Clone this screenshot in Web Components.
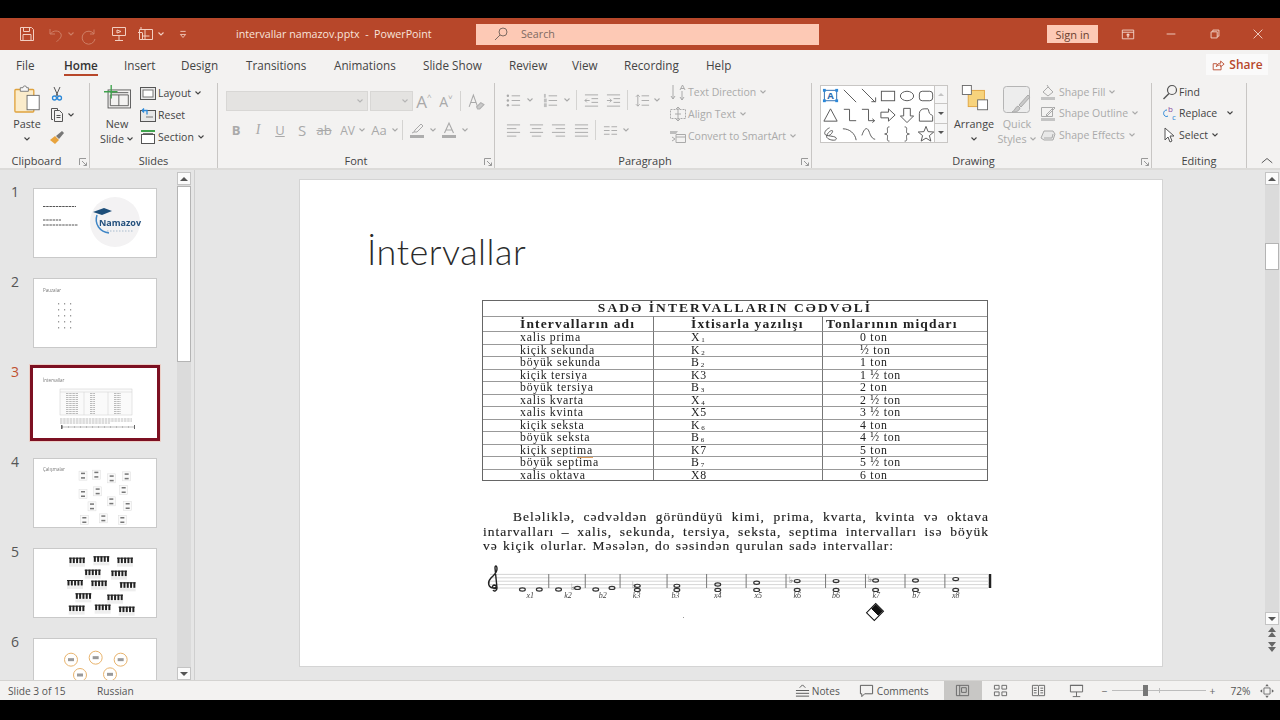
<!DOCTYPE html>
<html lang="en">
<head>
<meta charset="utf-8">
<title>intervallar namazov.pptx - PowerPoint</title>
<style>
  html, body { margin: 0; height: 720px; overflow: hidden; background: #000; font-family: "Open Sans", "Liberation Sans", sans-serif; }
</style>
</head>
<body>
<pp-app></pp-app>
<script>
const S = 'fill="none" stroke="currentColor" stroke-width="1"';
const ICONS = {
  save: `<path ${S} d="M2.500 2.500h11l2 2v11h-13zM5.500 2.500v4h6v-4M5 15.500v-6h8v6"/>`,
  undo: `<path ${S} stroke-width="1.300" d="M3 3v5h5M3.500 8c2-4 9-4 10.500 0 1 3-1.500 5.500-4.500 7.500"/>`,
  redo: `<path ${S} stroke-width="1.300" d="M12 3.500v4.500h-4M12 8a6.500 6.500 0 1 0 1 5"/>`,
  present: `<path ${S} d="M2.500 2.500h13v8h-13zM9 10.500v5M5 15.500h8M7 5l4 1.500L7 8z"/>`,
  table: `<path ${S} d="M2.500 4.500h13v10h-13zM1 7.500h4M8 4.500v10M5.500 7.500v7M5.500 11h7M4 2v3"/>`,
  qat: `<path ${S} d="M5 5h6M5 8.500h6L8 12z"/>`,
  search: `<circle ${S} cx="10" cy="6" r="4"/><path ${S} d="M7 9l-5 5"/>`,
  ribbon: `<path ${S} d="M1.500 3.500h13v10h-13zM1.500 6h13"/><path fill="currentColor" d="M8 7l2.500 2.500H8.800V12H7.200V9.500H5.500z"/>`,
  min: `<path ${S} d="M3 8h10"/>`,
  restore: `<path ${S} d="M3.500 5.500h7v7h-7zM5.500 5.500v-2h7v7h-2"/>`,
  close: `<path ${S} d="M3 3l10 10M13 3L3 13"/>`,
  share: `<path ${S} d="M2.500 6.500h4v1M2.500 6.500v7h9v-4M6 10c.5-3 3-4 5-4V3.500l4 3.500-4 3V8c-2 0-4 .5-5 2z"/>`,
  paste: `<rect x="1" y="5" width="21" height="25" rx="1" fill="#fbeccb" stroke="#e0a33e" stroke-width="1.500"/><path d="M7 5V3h3a2 2 0 0 1 4 0h2v4H7z" fill="#f6f6f6" stroke="#777"/><rect x="14.500" y="11.500" width="13.500" height="16" fill="#fff" stroke="#666"/>`,
  scissors: `<path fill="none" stroke="#555" d="M5 2l4 9M11 2L7 11"/><circle cx="5.500" cy="13" r="2" fill="none" stroke="#2b88d8" stroke-width="1.300"/><circle cx="10.500" cy="13" r="2" fill="none" stroke="#2b88d8" stroke-width="1.300"/>`,
  copy: `<path fill="none" stroke="#555" d="M4 12.500H2.500v-11h6v2M5.500 3.500h5l3 3v8h-8zM7.500 8.500h4M7.500 10.500h4"/>`,
  brush: `<path fill="#e8a33d" d="M1 11l5-4 4 4-4 4z"/><path fill="#777" d="M7 7l6-5 2 2-5 6z"/>`,
  newslide: `<rect x="4.500" y="5.500" width="25" height="20" fill="none" stroke="#555"/><path fill="none" stroke="#555" d="M7 8.500h20M16.500 11v12M7 11h20v12H7z"/><path fill="none" stroke="#3fa34d" stroke-width="1.500" d="M8 0v15M0 7.500h15"/>`,
  layout: `<rect x=".5" y="2.500" width="15" height="12" fill="#e8e8e8" stroke="#555"/><rect x="3" y="5" width="10" height="7" fill="#fff" stroke="#777"/>`,
  reset: `<rect x=".5" y="3.500" width="15" height="11" fill="#e8e8e8" stroke="#555"/><path fill="none" stroke="#2b88d8" stroke-width="1.300" d="M2 3.500h5v4M2 3.500l2-2M2 3.500l2 2"/><path fill="none" stroke="#777" d="M6 10h7"/>`,
  section: `<path fill="#3fa34d" d="M1 1h14v2H1z"/><rect x="1.500" y="5.500" width="13" height="9" fill="#fff" stroke="#555"/><path stroke="#777" d="M3 4.500h10"/>`,
  launcher: `<path fill="none" stroke="currentColor" d="M1.500 8V1.500H8M4 4l4.500 4.500M5.500 8.500h3v-3"/>`,
  clear: `<path fill="none" stroke="currentColor" d="M2 13l4-11 4 11M3.500 9h5"/><path fill="#c9c9c9" stroke="#b0b0b0" d="M9 13l4-4 3 2-4 4H10z"/>`,
  pen: `<path fill="none" stroke="currentColor" d="M5 10l1-2 6-6 2 2-6 6z"/><path fill="#adadad" d="M1 13h14v3H1z"/><path stroke="currentColor" d="M3 11l2-1"/>`,
  fcolor: `<path fill="none" stroke="currentColor" stroke-width="1.100" d="M3.500 11L8 1l4.500 10M5 8h6"/><path fill="#adadad" d="M1 13h14v3H1z"/>`,
  bullets: `<g fill="currentColor"><circle cx="2" cy="3" r="1.300"/><circle cx="2" cy="8" r="1.300"/><circle cx="2" cy="13" r="1.300"/></g><path ${S} d="M6 3h9M6 8h9M6 13h9"/>`,
  numbers: `<g fill="#c0c0c0"><rect x="1" y="1" width="2" height="4"/><rect x="1" y="6" width="3" height="4"/><rect x="1" y="11" width="3" height="4"/></g><path ${S} d="M6 3h9M6 8h9M6 13h9"/>`,
  outdent: `<path ${S} d="M1 2h14M8 6h7M8 10h7M1 14h14M6 8H1M3 6L1 8l2 2"/>`,
  indent: `<path ${S} d="M1 2h14M8 6h7M8 10h7M1 14h14M1 8h5M4 6l2 2-2 2"/>`,
  spacing: `<path ${S} d="M7 3h8M7 8h8M7 13h8M3 2v12M1 4l2-2 2 2M1 12l2 2 2-2"/>`,
  left: `<path ${S} d="M1 2h14M1 6h10M1 10h14M1 14h10"/>`,
  center: `<path ${S} d="M1 2h14M3 6h10M1 10h14M3 14h10"/>`,
  right: `<path ${S} d="M1 2h14M5 6h10M1 10h14M5 14h10"/>`,
  justify: `<path ${S} d="M1 2h14M1 6h14M1 10h14M1 14h14"/>`,
  columns: `<path ${S} d="M1 4h6M9 4h6M1 8h6M9 8h6M1 12h6M9 12h6"/>`,
  textdir: `<path ${S} d="M3 1v14M1 12l2 3 2-3M12 16V7M10 13l2 3 2-3"/><path ${S} d="M10 6l2.500-5L15 6M11 4.500h3"/>`,
  aligntext: `<path ${S} stroke-dasharray="2 1" d="M.5 3.500h15v9H.5z"/><path ${S} d="M8 1v14M6 3l2-2 2 2M6 13l2 2 2-2M5 8h6"/>`,
  smartart: `<path fill="#bdbdbd" d="M0 3h8l-2 3H0z"/><path ${S} d="M6 6.500h9.500v8H6zM6 9h9.500M2 9l3 2-3 2"/>`,
  arrange: `<rect x="8" y="6" width="18" height="18" fill="#f7d37c" stroke="#e0a33e"/><rect x="1.500" y=".5" width="10" height="10" fill="#fff" stroke="#666"/><rect x="18.500" y="16.500" width="11" height="11" fill="#fff" stroke="#666"/>`,
  quick: `<rect x="1.500" y="1.500" width="26" height="26" rx="3" fill="#ededed" stroke="#b5b5b5"/><path fill="#c9c9c9" stroke="#aaa" d="M10 27c3-1 3-5 6-6l2 2c-1 3-3 4-8 4zM17 20l9-10 2 2-9 10z"/>`,
  fill: `<path ${S} d="M3 8l5-5 5 5-5 4zM7 1l2 3"/><path fill="#c4c4c4" d="M1 13h14v3H1z"/>`,
  outline: `<path ${S} d="M1.500 2.500h11v9h-11z"/><path ${S} d="M6 10l8-8 1 1-8 8z"/><path fill="#c4c4c4" d="M1 13h14v3H1z"/>`,
  effects: `<path fill="#e8e8e8" stroke="currentColor" d="M1 11l3-7h9l2 3-2 6H4z"/><path stroke="currentColor" fill="none" d="M4 11h8l1-4"/>`,
  find: `<circle cx="10" cy="6" r="4.500" fill="none" stroke="#555" stroke-width="1.200"/><path stroke="#555" stroke-width="1.500" d="M7 9.500l-5.500 5.500"/>`,
  replace: `<path fill="none" stroke="#2b88d8" d="M5 5C2 5 1 8 2 10c1 1.500 2.500 2 4 1"/><g font-family="Open Sans" font-size="8"><text x="6" y="7" fill="#8a4fa0">b</text><text x="10" y="15" fill="#2b88d8">c</text></g>`,
  select: `<path fill="#fff" stroke="#555" d="M3 1v12l3-3 2 5 2-1-2-5h4z"/>`,
  notes: `<path ${S} d="M1 8h14M1 11h14M1 14h14M5 5l3-3 3 3"/>`,
  comments: `<path ${S} d="M1.500 2.500h13v9H6l-3 3v-3H1.500z"/>`,
  normal: `<path ${S} d="M1.500 2.500h13v11h-13zM5 2.500v11M7 5h5v5H7z"/>`,
  sorter: `<path ${S} d="M1.500 2.500h5v4h-5zM9.500 2.500h5v4h-5zM1.500 9.500h5v4h-5zM9.500 9.500h5v4h-5z"/>`,
  reading: `<path ${S} d="M1.500 2.500h6l.5 1 .5-1h6v11h-6L8 14l-.5-.5h-6zM8 3.500v10M3 5.500h3M3 8h3M3 10.500h3M10 5.500h3M10 8h3M10 10.500h3"/>`,
  slideshow: `<path ${S} d="M1.500 2.500h13v7h-13zM8 9.500v5M4 14.500h8M1 2.500h14"/>`,
  fit: `<path ${S} d="M4.500 4.500h7v7h-7z"/><path fill="currentColor" d="M8 0l2 2.500H6zM8 16l2-2.500H6zM0 8l2.500-2v4zM16 8l-2.500-2v4z"/>`,
  chev: `<path fill="none" stroke="currentColor" stroke-width="1.100" d="M1.500 2.500L4 5l2.500-2.500"/>`,
  upcaret: `<path fill="none" stroke="currentColor" stroke-width="1.100" d="M2 9l6-5 6 5"/>`,
  sTextbox: `<rect x="2.500" y="3.500" width="13" height="11" fill="#fff" stroke="#2b6cb0"/><g fill="#2b88d8"><rect x="1" y="2" width="3" height="3"/><rect x="14" y="2" width="3" height="3"/><rect x="1" y="13" width="3" height="3"/><rect x="14" y="13" width="3" height="3"/></g><text x="9" y="13" font-size="10" font-weight="700" text-anchor="middle" fill="#2b6cb0" font-family="Open Sans">A</text>`,
  sLine: `<path ${S} d="M3 3l13 13"/>`,
  sArrow: `<path ${S} d="M2 2l14 14M12 15.500h4.500V11"/>`,
  sRect: `<rect x="2.500" y="4.500" width="14" height="10" ${S}/>`,
  sEllipse: `<ellipse cx="9.500" cy="9.500" rx="7" ry="5" ${S}/>`,
  sRound: `<rect x="2.500" y="4.500" width="14" height="10" rx="3" ${S}/>`,
  sTriangle: `<path ${S} d="M9 3l7 13H2z"/>`,
  sElbow: `<path ${S} d="M3 3.500h6v12h7"/>`,
  sElbowA: `<path ${S} d="M2 3.500h7v12h6M13 13.500l2.500 2-2.500 2"/>`,
  sRight: `<path ${S} d="M2 6.500h8V3l7 6.500-7 6.500v-3.500H2z"/>`,
  sDown: `<path ${S} d="M6 2.500h7v8h3.500l-7 7-7-7H6z"/>`,
  sSnip: `<path ${S} d="M2.500 16V8a5 5 0 0 1 5-5h4c1 0 .5 5 3 6 1.500.5 2 1 2 2v5z"/>`,
  sFree: `<path ${S} d="M8 3C3 5 1 10 5 11c5 1 11 1 10 4-1 2-8 1-10-2-1-3 4-8 6-7 1 1-2 5-4 5"/>`,
  sArc: `<path ${S} d="M2 4c7 0 13 5 14 12"/>`,
  sCurve: `<path ${S} d="M2 11C5 2 8 2 10 8c1 3 3 7 6 7"/>`,
  sLbrace: `<path ${S} d="M11 2C8 2 9 4 9 7c0 2-1 2-3 2.500 2 .5 3 .5 3 2.500 0 3-1 5 2 5"/>`,
  sRbrace: `<path ${S} d="M7 2c3 0 2 2 2 5 0 2 1 2 3 2.500-2 .5-3 .5-3 2.500 0 3 1 5-2 5"/>`,
  sStar: `<path ${S} d="M9.500 1.500l2.200 5.500 6 .4-4.600 3.800 1.500 5.800-5.100-3.200-5.100 3.200 1.500-5.800L1.300 7.400l6-.4z"/>`
};

class PpIcon extends HTMLElement {
  connectedCallback() {
    const size = this.getAttribute('size') || 16;
    const box = this.getAttribute('box') || 16;
    this.attachShadow({ mode: 'open' }).innerHTML = `
      <style>:host { display: inline-flex; flex: none; } svg { display: block; overflow: visible; }</style>
      <svg width="${size}" height="${size}" viewBox="0 0 ${box} ${box}">${ICONS[this.getAttribute('name')] || ''}</svg>`;
  }
}

// title bar
class PpTitlebar extends HTMLElement {
  connectedCallback() {
    this.attachShadow({ mode: 'open' }).innerHTML = `
      <style>
        :host { display: flex; align-items: center; height: 32px; background: #b7472a; color: #f6d9cf; font-size: 10.700px; }
        .qat { display: grid; grid-template-columns: 29px 20px 15px 28px 27px 20px 19px 16px; flex: none; width: 236px; box-sizing: border-box; padding-left: 18px; align-items: center; color: #f3cfc2; justify-items: start; }
        .dim { color: #cf7f66; }
        .title { width: 240px; flex: none; color: #f8e4dc; margin-top: -1px; }
        .search { display: flex; flex: none; align-items: center; width: 343px; height: 21px; background: #fdc9b5; color: #7d6a62; box-sizing: border-box; padding-left: 17px; gap: 12px; }
        .right { display: flex; align-items: center; margin-left: 228px; }
        .sign { width: 51px; height: 18px; flex: none; background: #fdc9b5; color: #6b3f30; display: flex; align-items: center; justify-content: center; font-size: 11px; }
        .ctl { width: 43.500px; flex: none; display: flex; justify-content: center; color: #f6d9cf; }
        .sign + .ctl { margin-left: 8px; }
      </style>
      <div class="qat">
        <pp-icon name="save" size="18" box="18"></pp-icon>
        <pp-icon name="undo" size="16" class="dim"></pp-icon>
        <pp-icon name="chev" size="8" box="8" class="dim"></pp-icon>
        <pp-icon name="redo" size="17" box="17" class="dim"></pp-icon>
        <pp-icon name="present" size="18" box="18"></pp-icon>
        <pp-icon name="table" size="18" box="18"></pp-icon>
        <pp-icon name="chev" size="8" box="8"></pp-icon>
        <pp-icon name="qat" size="14"></pp-icon>
      </div>
      <div class="title">intervallar namazov.pptx&nbsp; -&nbsp; PowerPoint</div>
      <div class="search"><pp-icon name="search" size="16"></pp-icon><span>Search</span></div>
      <div class="right">
        <div class="sign">Sign in</div>
        <div class="ctl"><pp-icon name="ribbon" size="14" box="16"></pp-icon></div>
        <div class="ctl"><pp-icon name="min" size="14" box="16"></pp-icon></div>
        <div class="ctl"><pp-icon name="restore" size="14" box="16"></pp-icon></div>
        <div class="ctl"><pp-icon name="close" size="14" box="16"></pp-icon></div>
      </div>`;
  }
}

// ribbon tabs
class PpTabs extends HTMLElement {
  connectedCallback() {
    const tabs = [['File', 48], ['Home', 60], ['Insert', 57], ['Design', 65], ['Transitions', 88], ['Animations', 89], ['Slide Show', 86], ['Review', 63], ['View', 52], ['Recording', 82], ['Help', 60]];
    this.attachShadow({ mode: 'open' }).innerHTML = `
      <style>
        :host { display: flex; align-items: flex-start; height: 30px; background: #f3f2f1; color: #444; font-size: 11.700px; padding: 4px 0 0 16px; box-sizing: border-box; }
        .tab { flex: none; }
        .tab span { display: inline-block; line-height: 22px; }
        .on span { font-weight: 600; color: #333; box-shadow: inset 0 -2px 0 #b7472a; }
        .share { margin-left: auto; margin-right: 12px; width: 62px; height: 21px; background: #fafafa; color: #b7472a; font-weight: 600; font-size: 12px; display: flex; align-items: center; justify-content: center; gap: 4px; }
      </style>
      ${tabs.map(([t, w]) => `<div class="tab ${t === 'Home' ? 'on' : ''}" style="width:${w}px"><span>${t}</span></div>`).join('')}
      <div class="share"><pp-icon name="share" size="14" box="16"></pp-icon>Share</div>`;
  }
}

// one ribbon group with its label below
class RbGroup extends HTMLElement {
  connectedCallback() {
    const launcher = this.hasAttribute('launcher');
    this.attachShadow({ mode: 'open' }).innerHTML = `
      <style>
        :host { display: grid; grid-template-rows: 71px 14px; flex: none; box-sizing: border-box; height: 85px; border-right: 1px solid #c8c6c4; width: ${this.getAttribute('w')}px; position: relative; }
        .body { display: flex; align-items: flex-start; }
        .foot { display: flex; align-items: center; justify-content: center; font-size: 11px; color: #444; line-height: 14px; padding-right: ${this.getAttribute('shift') || 0}px; }
        pp-icon { position: absolute; right: 1px; bottom: 1px; color: #999; }
      </style>
      <div class="body"><slot></slot></div>
      <div class="foot">${this.getAttribute('label')}</div>
      ${launcher ? '<pp-icon name="launcher" size="10" box="10"></pp-icon>' : ''}`;
  }
}

// big button: icon, then one or two lines of label
class RbBig extends HTMLElement {
  connectedCallback() {
    const lines = this.getAttribute('label').split('|');
    const chev = '<pp-icon name="chev" size="8" box="8"></pp-icon>';
    this.attachShadow({ mode: 'open' }).innerHTML = `
      <style>
        :host { display: flex; flex-direction: column; align-items: center; flex: none; width: ${this.getAttribute('w') || 40}px; font-size: 10.800px; color: ${this.hasAttribute('off') ? '#aaa' : '#444'}; }
        .ico { height: 33px; display: flex; align-items: flex-start; justify-content: center; padding-top: 2px; box-sizing: border-box; }
        .l { height: 15px; line-height: 15px; display: flex; align-items: center; gap: 2px; white-space: nowrap; }
      </style>
      <div class="ico"><slot></slot></div>
      <div class="l">${lines[0]}</div>
      <div class="l">${lines[1] || ''}${chev}</div>`;
  }
}

// small row button: icon, label and optional chevron
class RbRow extends HTMLElement {
  connectedCallback() {
    const off = this.hasAttribute('off');
    this.attachShadow({ mode: 'open' }).innerHTML = `
      <style>
        :host { display: flex; align-items: center; height: ${this.getAttribute('h') || 22}px; flex: none; font-size: 10.500px; color: ${off ? '#aaa' : '#444'}; white-space: nowrap; }
        pp-icon { margin-right: ${this.getAttribute('m') || 2}px; }
        .ch { margin: 0 0 0 ${this.getAttribute('gap') || 3}px; }
      </style>
      <pp-icon name="${this.getAttribute('icon')}" size="16"></pp-icon>
      ${this.getAttribute('label') || ''}
      ${this.hasAttribute('chev') ? '<pp-icon class="ch" name="chev" size="8" box="8"></pp-icon>' : ''}`;
  }
}

// fixed width cell in the font and paragraph rows
class RbCell extends HTMLElement {
  connectedCallback() {
    const name = this.getAttribute('icon');
    const size = this.getAttribute('size') || 15;
    this.attachShadow({ mode: 'open' }).innerHTML = `
      <style>
        :host { display: flex; align-items: center; justify-content: center; flex: none; width: ${this.getAttribute('w') || 22}px; height: 20px; color: #a9a9a9; font-size: 13px; }
      </style>
      ${name ? `<pp-icon name="${name}" size="${size}" box="${name === 'chev' ? 8 : 16}"></pp-icon>` : ''}<slot></slot>`;
  }
}

class RbDiv extends HTMLElement {
  connectedCallback() {
    this.attachShadow({ mode: 'open' }).innerHTML = `<style>:host { display: block; flex: none; width: 1px; height: 20px; background: #d4d3d1; }</style>`;
  }
}

// shape gallery with its three scroll buttons
class RbGallery extends HTMLElement {
  connectedCallback() {
    const names = ['sTextbox', 'sLine', 'sArrow', 'sRect', 'sEllipse', 'sRound', 'sTriangle', 'sElbow', 'sElbowA', 'sRight', 'sDown', 'sSnip', 'sFree', 'sArc', 'sCurve', 'sLbrace', 'sRbrace', 'sStar'];
    this.attachShadow({ mode: 'open' }).innerHTML = `
      <style>
        :host { display: flex; flex: none; margin: 2px 0 0 8px; height: 58px; }
        .grid { display: grid; grid-template-columns: repeat(6, 19px); grid-auto-rows: 19px; width: 115px; padding: 1px 0 0 1px; box-sizing: border-box; background: #fff; border: 1px solid #c8c6c4; color: #555; }
        .btns { display: grid; grid-template-rows: repeat(3, 1fr); width: 13px; }
        .btns div { border: 1px solid #c8c6c4; border-left: 0; background: #f6f6f6; display: flex; align-items: center; justify-content: center; }
        .btns div + div { border-top: 0; }
        .tri { width: 0; height: 0; border: 3px solid transparent; }
        .up { border-bottom-color: #c4c4c4; margin-bottom: 3px; }
        .dn { border-top-color: #555; margin-top: 3px; }
      </style>
      <div class="grid">${names.map(n => `<pp-icon name="${n}" size="18" box="19"></pp-icon>`).join('')}</div>
      <div class="btns"><div><span class="tri up"></span></div><div><span class="tri dn"></span></div><div><span class="tri dn"></span></div></div>`;
  }
}

class PpRibbon extends HTMLElement {
  connectedCallback() {
    this.attachShadow({ mode: 'open' }).innerHTML = `
      <style>
        :host { display: flex; height: 90px; box-sizing: border-box; padding-top: 3px; background: #f3f2f1; border-bottom: 2px solid #dcdbd9; position: relative; }
        .col { display: flex; flex-direction: column; margin-top: -1px; flex: none; }
        .col.up { margin-top: -2px; }
        .rows { display: flex; flex-direction: column; flex: none; }
        .row { display: flex; align-items: center; flex: none; }
        .combo { height: 20px; background: #e4e3e1; border: 1px solid #d8d7d5; box-sizing: border-box; display: flex; align-items: center; justify-content: flex-end; padding-right: 3px; color: #b5b5b5; flex: none; }
        b.t { font-weight: 700; } i.t { font-family: "Liberation Serif", serif; font-size: 14px; }
        .cap { position: absolute; left: 1260px; top: 75px; color: #555; }
        .su { font-size: 8px; position: relative; top: -5px; }
      </style>
      <rb-group w="90" label="Clipboard" launcher shift="16">
        <rb-big label="Paste" w="40" style="margin-left:7px"><pp-icon name="paste" size="27" box="30"></pp-icon></rb-big>
        <div class="col" style="margin-left:2px">
          <rb-row icon="scissors"></rb-row>
          <rb-row icon="copy" chev gap="0"></rb-row>
          <rb-row icon="brush"></rb-row>
        </div>
      </rb-group>
      <rb-group w="128" label="Slides" shift="0">
        <rb-big label="New|Slide" w="40" style="margin-left:7px"><pp-icon name="newslide" size="27" box="30"></pp-icon></rb-big>
        <div class="col" style="margin-left:3px">
          <rb-row icon="layout" label="Layout" chev></rb-row>
          <rb-row icon="reset" label="Reset"></rb-row>
          <rb-row icon="section" label="Section" chev></rb-row>
        </div>
      </rb-group>
      <rb-group w="277" label="Font" launcher>
        <div class="rows" style="margin:8px 0 0 8px">
          <div class="row">
            <div class="combo" style="width:142px"><pp-icon name="chev" size="8" box="8"></pp-icon></div>
            <div class="combo" style="width:43px;margin-left:2px"><pp-icon name="chev" size="8" box="8"></pp-icon></div>
            <rb-cell style="font-size:17px">A<span class="su">^</span></rb-cell>
            <rb-cell style="font-size:14px">A<span class="su">˅</span></rb-cell>
            <rb-div style="margin:0 3px 0 3px"></rb-div>
            <rb-cell icon="clear" size="17"></rb-cell>
          </div>
          <div class="row" style="margin:9px 0 0 -1px">
            <rb-cell><b class="t">B</b></rb-cell><rb-cell><i class="t">I</i></rb-cell><rb-cell style="text-decoration:underline">U</rb-cell><rb-cell style="font-size:15px">S</rb-cell>
            <rb-cell style="text-decoration:line-through">ab</rb-cell>
            <rb-cell w="19" style="margin-left:3px;font-size:12px">AV</rb-cell><rb-cell icon="chev" w="9" size="8"></rb-cell>
            <rb-cell w="22" style="margin-left:2px">Aa</rb-cell><rb-cell icon="chev" w="9" size="8"></rb-cell>
            <rb-div style="margin:0 3px 0 3px"></rb-div>
            <rb-cell icon="pen" w="22" size="16"></rb-cell><rb-cell icon="chev" w="9" size="8"></rb-cell>
            <rb-cell icon="fcolor" w="22" size="16" style="margin-left:1px"></rb-cell><rb-cell icon="chev" w="9" size="8"></rb-cell>
          </div>
        </div>
      </rb-group>
      <rb-group w="317" label="Paragraph" launcher shift="16">
        <div class="rows" style="margin:7px 0 0 7px;width:166px">
          <div class="row">
            <rb-cell icon="bullets"></rb-cell><rb-cell icon="chev" w="12" size="8"></rb-cell>
            <rb-cell icon="numbers" style="margin-left:3px"></rb-cell><rb-cell icon="chev" w="12" size="8"></rb-cell>
            <rb-div style="margin:0 3px 0 3px"></rb-div>
            <rb-cell icon="outdent"></rb-cell><rb-cell icon="indent"></rb-cell>
            <rb-div style="margin:0 3px 0 3px"></rb-div>
            <rb-cell icon="spacing"></rb-cell><rb-cell icon="chev" w="8" size="8"></rb-cell>
          </div>
          <div class="row" style="margin-top:10px">
            <rb-cell icon="left"></rb-cell><rb-cell icon="center" style="margin-left:1px"></rb-cell><rb-cell icon="right"></rb-cell><rb-cell icon="justify" style="margin-left:1px"></rb-cell>
            <rb-div style="margin:0 3px 0 3px"></rb-div>
            <rb-cell icon="columns"></rb-cell><rb-cell icon="chev" w="10" size="8"></rb-cell>
          </div>
        </div>
        <div class="col up" style="margin-left:2px">
          <rb-row off icon="textdir" label="Text Direction" chev></rb-row>
          <rb-row off icon="aligntext" label="Align Text" chev></rb-row>
          <rb-row off icon="smartart" label="Convert to SmartArt" chev></rb-row>
        </div>
      </rb-group>
      <rb-group w="340" label="Drawing" launcher shift="16">
        <rb-gallery></rb-gallery>
        <rb-big label="Arrange" w="44" style="margin-left:4px"><pp-icon name="arrange" size="27" box="30"></pp-icon></rb-big>
        <rb-big off label="Quick|Styles" w="44" style="margin-left:-1px"><pp-icon name="quick" size="30" box="30"></pp-icon></rb-big>
        <div class="col up" style="margin-left:1px">
          <rb-row off h="21.500" m="3" icon="fill" label="Shape Fill" chev></rb-row>
          <rb-row off h="21.500" m="3" icon="outline" label="Shape Outline" chev></rb-row>
          <rb-row off h="21.500" m="3" icon="effects" label="Shape Effects" chev></rb-row>
        </div>
      </rb-group>
      <rb-group w="95" label="Editing">
        <div class="col up" style="margin-left:10px">
          <rb-row h="21.500" m="1" icon="find" label="Find"></rb-row>
          <rb-row h="21.500" m="1" icon="replace" label="Replace" chev gap="9"></rb-row>
          <rb-row h="21.500" m="1" icon="select" label="Select" chev></rb-row>
        </div>
      </rb-group>
      <pp-icon class="cap" name="upcaret" size="14"></pp-icon>`;
  }
}

// vertical scrollbar, the sizes come from attributes
class PpScroll extends HTMLElement {
  connectedCallback() {
    const top = this.getAttribute('top'), h = this.getAttribute('thumb');
    const nav = this.hasAttribute('nav');
    this.attachShadow({ mode: 'open' }).innerHTML = `
      <style>
        :host { display: flex; flex-direction: column; flex: none; width: 14px; height: ${this.getAttribute('h')}px; margin-top: 2px; }
        .b { height: 13px; flex: none; background: #fbfbfb; border: 1px solid #c4c4c4; box-sizing: border-box; display: flex; align-items: center; justify-content: center; }
        .track { flex: 1; background: #dbdbdb; padding-top: ${top}px; }
        .thumb { height: ${h}px; background: #fff; border: 1px solid #b4b4b4; box-sizing: border-box; }
        .t { width: 0; height: 0; border: 4px solid transparent; }
        .u { border-bottom-color: #555; margin-bottom: 4px; }
        .d { border-top-color: #555; margin-top: 4px; }
        .n { height: 15px; flex: none; display: flex; align-items: center; justify-content: center; color: #666; font-size: 8px; }
      </style>
      <div class="b"><span class="t u"></span></div>
      <div class="track"><div class="thumb"></div></div>
      <div class="b"><span class="t d"></span></div>
      ${nav ? `<div class="n"><svg width="10" height="11" viewBox="0 0 10 11"><path fill="currentColor" d="M5 0l4 5H1zM5 5l4 5H1z"/></svg></div>
               <div class="n"><svg width="10" height="11" viewBox="0 0 10 11"><path fill="currentColor" d="M5 5L1 0h8zM5 10L1 5h8z"/></svg></div>` : ''}`;
  }
}

// small picture of a slide with its number beside it
class SlideThumb extends HTMLElement {
  connectedCallback() {
    const sel = this.hasAttribute('selected');
    this.attachShadow({ mode: 'open' }).innerHTML = `
      <style>
        :host { display: flex; flex: none; align-items: flex-start; height: 71px; }
        .n { width: 22px; margin-left: 11px; font-size: 14px; line-height: 16px; margin-top: -4px; color: ${sel ? '#c0502f' : '#555'}; }
        .box { width: 124px; height: 70px; box-sizing: border-box; background: #fff; overflow: hidden; flex: none;
               ${sel ? 'box-shadow: 0 0 0 3px #7c1022, 0 0 0 4px #eccfc7;' : 'border: 1px solid #c9c9c9;'} }
        ::slotted(svg) { display: block; ${sel ? '' : 'margin: -1px;'} filter: blur(.25px); }
      </style>
      <div class="n">${this.getAttribute('n')}</div>
      <div class="box"><slot></slot></div>`;
  }
}

function thumbSvg(body) {
  return `<svg width="124" height="70" viewBox="0 0 124 70" font-family="Open Sans">${body}</svg>`;
}
const txt = (x, y, w, c) => `<path d="M${x} ${y}h${w}" stroke="${c}" stroke-width="1" stroke-dasharray="2.500 .7"/>`;
const mini = [
  thumbSvg(txt(10, 18.500, 33, '#555') + txt(10, 32, 18, '#555') + txt(10, 37, 35, '#555') + `
    <circle cx="82" cy="34" r="25" fill="#f3f2f3"/>
    <path d="M60 24l11-4 8 3-10 4z" fill="#1d4e79"/><path d="M64 27c-3 9 3 17 12 18" fill="none" stroke="#3f86c6" stroke-width="1.500"/>
    <text x="87" y="38" font-size="9" font-weight="700" text-anchor="middle" fill="#24507c">Namazov</text>
    <path d="M74 43h26" stroke="#a9bccd" stroke-width="1" stroke-dasharray="1.500 1.500"/>`),
  thumbSvg(`<text x="10" y="14" font-size="4.500" fill="#777">Pauzalar</text>
    <g fill="#999">${[0, 1, 2, 3, 4].map(r => [25, 31, 37].map(x => `<rect x="${x}" y="${25 + r * 6}" width="1.200" height="1.500"/>`).join('')).join('')}</g>`),
  thumbSvg(`<text x="10" y="14" font-size="4.500" fill="#777">İntervallar</text>
    <rect x="27" y="21" width="72" height="26" fill="#fafafa" stroke="#ccc" stroke-width=".5"/>
    <path d="M27 24h72M51 24v23M75 24v23" stroke="#ccc" stroke-width=".5"/>
    ${Array.from({ length: 11 }, (_, r) => txt(33, 25.500 + r * 2, 12, '#bbb') + txt(57, 25.500 + r * 2, 5, '#bbb') + txt(81, 25.500 + r * 2, 7, '#bbb')).join('')}
    ${txt(27, 51, 72, '#bbb') + txt(27, 53, 72, '#bbb') + txt(27, 55, 50, '#bbb')}
    <path d="M29 59h72" stroke="#ddd" stroke-width="2"/><path d="M29 59h72" stroke="#aaa" stroke-width="1.500" stroke-dasharray="1 5"/><rect x="28" y="57" width="1.500" height="4" fill="#666"/><rect x="101" y="57" width="1" height="4" fill="#666"/>`),
  thumbSvg(`<text x="10" y="13" font-size="4.500" fill="#777">Çalışmalar</text>
    <g>${[[250, 75], [290, 72], [336, 83], [381, 77], [250, 130], [294, 122], [372, 118], [277, 167], [335, 152], [384, 166], [254, 208], [311, 203], [368, 208]].map(([x, y]) => {
      const cx = (x - 100) / 3, cy = (y - 22) / 3;
      return `<rect x="${cx - 4}" y="${cy - 4.500}" width="8" height="9" fill="#fafafa" stroke="#ddd" stroke-width=".5"/><rect x="${cx - 2}" y="${cy - 3}" width="4" height="1.500" fill="#777"/><rect x="${cx - 2}" y="${cy + 1.500}" width="4" height="1.500" fill="#777"/>`;
    }).join('')}</g>`),
  thumbSvg([[232, 336], [305, 332], [376, 336], [279, 372], [358, 375], [226, 403], [298, 405], [384, 410], [251, 443], [346, 447], [231, 480], [309, 477], [381, 483]].map(([x, y]) => {
    const cx = (x - 100) / 3, cy = (y - 292) / 3;
    return `<rect x="${cx - 8}" y="${cy - 5}" width="16" height="1" fill="#222"/>` + [0, 1, 2, 3, 4].map(k => `<rect x="${cx - 7.500 + k * 3.300}" y="${cy - 5}" width="2" height="5.500" fill="#222"/>`).join('') + `<rect x="${cx - 8}" y="${cy + 1}" width="16" height="3" fill="#eee"/>`;
  }).join('')),
  thumbSvg([[214, 627], [288, 621], [363, 627], [241, 673], [331, 671], [285, 712]].map(([x, y]) => {
    const cx = (x - 100) / 3, cy = (y - 562) / 3;
    return `<circle cx="${cx}" cy="${cy}" r="6.500" fill="#fff" stroke="#e8b36c"/><rect x="${cx - 3}" y="${cy - 1.500}" width="6" height="3" fill="#999"/>`;
  }).join(''))
];

class PpThumbs extends HTMLElement {
  connectedCallback() {
    this.attachShadow({ mode: 'open' }).innerHTML = `
      <style>
        :host { display: flex; flex: none; width: 195px; box-sizing: border-box; border-right: 1px solid #cfcfcf; background: #e6e6e6; }
        .list { display: flex; flex-direction: column; gap: 19px; width: 177px; height: 510px; overflow: hidden; padding-top: 18px; box-sizing: border-box; }
      </style>
      <div class="list">
        ${mini.map((m, i) => `<slide-thumb n="${i + 1}" ${i === 2 ? 'selected' : ''}>${m}</slide-thumb>`).join('')}
      </div>
      <pp-scroll h="508" top="1" thumb="176"></pp-scroll>`;
  }
}

// table picture of the slide
class IntervalTable extends HTMLElement {
  connectedCallback() {
    const s = n => `<small>${n}</small>`;
    const rows = [
      ['xalis prima', 'X' + s(1), '0 ton'], ['kiçik sekunda', 'K' + s(2), '½ ton'], ['böyük sekunda', 'B' + s(2), '1 ton'],
      ['kiçik tersiya', 'K3', '1 ½ ton'], ['böyük tersiya', 'B' + s(3), '2 ton'], ['xalis kvarta', 'X' + s(4), '2 ½ ton'],
      ['xalis kvinta', 'X5', '3 ½ ton'], ['kiçik seksta', 'K' + s(6), '4 ton'], ['böyük seksta', 'B' + s(6), '4 ½ ton'],
      ['kiçik septi<u>ma</u>', 'K7', '5 ton'], ['böyük septima', 'B' + s(7), '5 ½ ton'], ['xalis oktava', 'X8', '6 ton']
    ];
    this.attachShadow({ mode: 'open' }).innerHTML = `
      <style>
        :host { display: block; width: 506px; font-family: "Liberation Serif", serif; color: #222; filter: blur(.35px); }
        .t { display: grid; grid-template-columns: 171px 169px 1fr; grid-template-rows: 15px 15px repeat(12, 12.500px); width: 506px; box-sizing: border-box; height: 181px; border: 1.500px solid #666; overflow: hidden; }
        .c { border-top: 1px solid #999; border-right: 1px solid #777; box-sizing: border-box; white-space: nowrap; font-size: 11.800px; line-height: 11px; letter-spacing: .75px; padding-left: 37px; }
        .cap { grid-column: 1 / 4; border: 0; padding: 0; text-align: center; font-weight: 700; font-size: 13.500px; letter-spacing: 2.100px; line-height: 13px; }
        .h { font-weight: 700; font-size: 13.500px; letter-spacing: 1.150px; line-height: 13px; }
        .h.last { padding-left: 3px; }
        small { font-size: 7px; line-height: 0; vertical-align: -1px; margin-left: 1px; }
        u { text-decoration: none; border-bottom: 1px solid #e3a15f; }
      </style>
      <div class="t">
        <div class="c cap">SADƏ İNTERVALLARIN CƏDVƏLİ</div>
        <div class="c h">İntervalların adı</div><div class="c h">İxtisarla yazılışı</div><div class="c h last" style="border-right:0">Tonlarının miqdarı</div>
        ${rows.map(r => r.map((c, i) => `<div class="c" ${i === 2 ? 'style="border-right:0"' : ''}>${c}</div>`).join('')).join('')}
      </div>`;
  }
}

// staff with the simple intervals, drawn in page pixels
class IntervalStaff extends HTMLElement {
  connectedCallback() {
    const fx = z => 470 + z * .338, fy = z => 500 + z * .338;
    const bars = [233, 341, 444, 583, 700, 817, 935, 1052, 1170, 1287, 1405];
    const notes = [[155, 265], [205, 265], [262, 265], [318, 260], [372, 265], [420, 260], [495, 254], [495, 266], [612, 254], [612, 266], [733, 250], [733, 266], [848, 245], [848, 266], [968, 240], [968, 266], [1083, 240], [1083, 266], [1200, 238], [1200, 266], [1318, 238], [1318, 266], [1437, 234], [1437, 266]];
    const labels = [['x1', 178], ['k2', 290], ['b2', 393], ['k3', 493], ['b3', 608], ['x4', 733], ['x5', 853], ['k6', 968], ['b6', 1083], ['k7', 1202], ['b7', 1320], ['x8', 1437]];
    const flats = [[300, 260], [478, 254], [945, 240], [1178, 238]];
    this.attachShadow({ mode: 'open' }).innerHTML = `
      <style>:host { display: block; width: 512px; margin-top: 8px; filter: blur(.3px); } svg { display: block; overflow: visible; }</style>
      <svg width="512" height="46" viewBox="482 562 512 46">
        <g stroke="#c9c9c9" stroke-width=".8">${[0, 1, 2, 3, 4].map(i => `<path d="M490 ${574.400 + i * 3.400}H988"/>`).join('')}</g>
        <path d="M497 588c-4 2-6-2-3-3 3 0 3 3 0 3-6 0-7-6-3-10 3-3 6-5 6-9s-2-4-2-1l2 20c0 3-3 4-4 2" fill="none" stroke="#222" stroke-width="1.400"/>
        <g stroke="#777" stroke-width="1">${bars.map(b => `<path d="M${fx(b)} 574V588"/>`).join('')}</g>
        <path d="M990 574V588" stroke="#222" stroke-width="2.500"/>
        <g fill="none" stroke="#333" stroke-width="1.200">${notes.map(([x, y]) => `<ellipse cx="${fx(x)}" cy="${fy(y)}" rx="2.900" ry="1.600"/>`).join('')}</g>
        <g fill="#444" font-family="Liberation Serif" font-size="9">${flats.map(([x, y]) => `<text x="${fx(x)}" y="${fy(y) + 2}">♭</text>`).join('')}</g>
        <g fill="#444" font-family="Liberation Serif" font-size="8" font-style="italic" text-anchor="middle">${labels.map(([t, x]) => `<text x="${fx(x)}" y="598">${t}</text>`).join('')}</g>
      </svg>`;
  }
}

// the slide itself
class PpSlide extends HTMLElement {
  connectedCallback() {
    this.attachShadow({ mode: 'open' }).innerHTML = `
      <style>
        :host { display: block; flex: none; position: relative; width: 862px; height: 486px; box-sizing: border-box; margin: 10px 0 0 105px; background: #fff; outline: 1px solid #d4d4d4; padding: 46px 0 0 67px; }
        h1 { margin: 0; font: 300 36px/50px Lato, "Open Sans", sans-serif; color: #2b2b2b; letter-spacing: .5px; }
        .body { margin: 24px 0 0 115px; width: 506px; }
        p { margin: 29px 0 0 1px; width: 506px; font: 13.500px/14.500px "Liberation Serif", serif; color: #222; letter-spacing: 1px; -webkit-text-stroke: .15px #222; filter: blur(.3px); }
        p span { display: block; text-align-last: justify; white-space: nowrap; }
        p span.f { padding-left: 30px; }
        p span.l { text-align-last: left; word-spacing: 1px; }
        .eraser { position: absolute; left: 568px; top: 426px; width: 12px; height: 10px; background: linear-gradient(90deg, #fff 0 45%, #111 45%); border: 1px solid #111; transform: rotate(-45deg); }
        .dot { position: absolute; left: 383px; top: 437px; width: 1px; height: 1px; background: #999; }
      </style>
      <h1>İntervallar</h1>
      <div class="body">
        <interval-table></interval-table>
        <p><span class="f">Beləliklə, cədvəldən göründüyü kimi, prima, kvarta, kvinta və oktava</span><span>intarvalları – xalis, sekunda, tersiya, seksta, septima intervalları isə böyük</span><span class="l">və kiçik olurlar. Məsələn, do səsindən qurulan sadə intervallar:</span></p>
        <interval-staff></interval-staff>
      </div>
      <div class="dot"></div>
      <div class="eraser"></div>`;
  }
}

class PpStatus extends HTMLElement {
  connectedCallback() {
    this.attachShadow({ mode: 'open' }).innerHTML = `
      <style>
        :host { display: flex; align-items: center; height: 20px; background: #f3f2f1; border-top: 1px solid #d4d3d1; box-sizing: border-box; color: #555; font-size: 10.200px; }
        .a { margin-left: 8px; width: 89px; }
        .it { display: flex; align-items: center; gap: 2px; color: #555; }
        .notes { margin-left: 661px; width: 64px; }
        .com { width: 85px; gap: 3px; }
        .v { width: 38px; height: 19px; display: flex; align-items: center; justify-content: center; color: #666; }
        .on { background: #c8c7c5; }
        .zoom { display: flex; align-items: center; margin-left: 6px; color: #666; }
        .sl { width: 94px; height: 1px; background: #bdbdbd; margin: 0 4px; position: relative; }
        .sl i { position: absolute; left: 31px; top: -5px; width: 5px; height: 11px; background: #777; }
        .sl b { position: absolute; left: 47px; top: -2px; width: 1px; height: 5px; background: #bdbdbd; }
        .pct { margin-left: 15px; width: 30px; }
      </style>
      <div class="a">Slide 3 of 15</div><div>Russian</div>
      <div class="it notes"><pp-icon name="notes" size="15"></pp-icon>Notes</div>
      <div class="it com"><pp-icon name="comments" size="15"></pp-icon>Comments</div>
      <div class="v on"><pp-icon name="normal" size="15"></pp-icon></div>
      <div class="v"><pp-icon name="sorter" size="15"></pp-icon></div>
      <div class="v"><pp-icon name="reading" size="15"></pp-icon></div>
      <div class="v"><pp-icon name="slideshow" size="15"></pp-icon></div>
      <div class="zoom">−<div class="sl"><i></i><b></b></div>+</div>
      <div class="pct">72%</div>
      <pp-icon name="fit" size="14" style="color:#666"></pp-icon>`;
  }
}

class PpApp extends HTMLElement {
  connectedCallback() {
    this.attachShadow({ mode: 'open' }).innerHTML = `
      <style>
        :host { display: flex; flex-direction: column; width: 1280px; height: 720px; background: #000; font-family: "Open Sans", "Liberation Sans", sans-serif; }
        .gap { height: 18px; flex: none; }
        .main { display: flex; height: 510px; flex: none; background: #e6e6e6; }
        .editor { flex: 1; display: flex; }
        .bar { display: flex; width: 15px; flex: none; }
      </style>
      <div class="gap"></div>
      <pp-titlebar></pp-titlebar>
      <pp-tabs></pp-tabs>
      <pp-ribbon></pp-ribbon>
      <div class="main">
        <pp-thumbs></pp-thumbs>
        <div class="editor"><pp-slide></pp-slide></div>
        <div class="bar"><pp-scroll h="483" top="58" thumb="27" nav></pp-scroll></div>
      </div>
      <pp-status></pp-status>`;
  }
}

customElements.define('pp-icon', PpIcon);
customElements.define('pp-titlebar', PpTitlebar);
customElements.define('pp-tabs', PpTabs);
customElements.define('rb-group', RbGroup);
customElements.define('rb-big', RbBig);
customElements.define('rb-row', RbRow);
customElements.define('rb-cell', RbCell);
customElements.define('rb-div', RbDiv);
customElements.define('rb-gallery', RbGallery);
customElements.define('pp-ribbon', PpRibbon);
customElements.define('pp-scroll', PpScroll);
customElements.define('slide-thumb', SlideThumb);
customElements.define('pp-thumbs', PpThumbs);
customElements.define('interval-table', IntervalTable);
customElements.define('interval-staff', IntervalStaff);
customElements.define('pp-slide', PpSlide);
customElements.define('pp-status', PpStatus);
customElements.define('pp-app', PpApp);
</script>
</body>
</html>
